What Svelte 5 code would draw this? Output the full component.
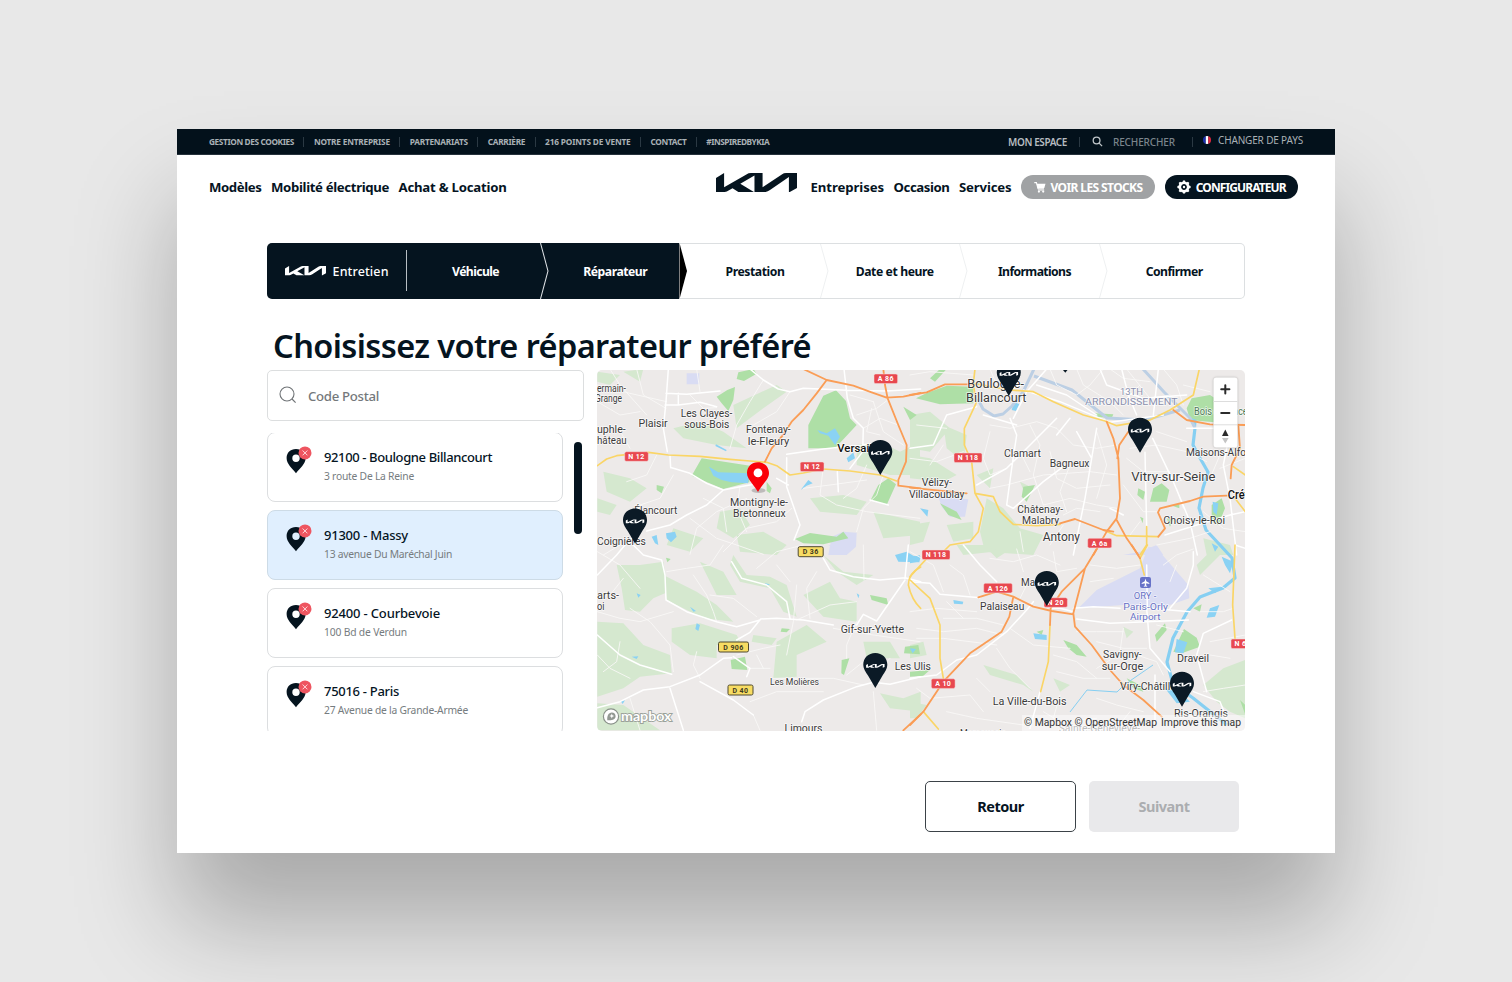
<script>
  // Spreads the letters of a label so that it fills the given width.
  function fit(node, width) {
    node.style.letterSpacing = '0';
    const natural = node.getBoundingClientRect().width;
    node.style.letterSpacing = `${(width - natural) / node.textContent.length}px`;
  }

  const logo = 'M78 173L102 159V199L168 163Q174 159 182 159H216V199L273 163Q279 159 286 159H318V201L294 214V170L238 207Q229 213 220 213H192V166L150 189L191 213H145L127 202L110 211Q105 213 98 213H78Z';

  const topLinks = [
    ['GESTION DES COOKIES', 85],
    ['NOTRE ENTREPRISE', 76],
    ['PARTENARIATS', 58],
    ['CARRIÈRE', 37.5],
    ['216 POINTS DE VENTE', 85.5],
    ['CONTACT', 36],
    ['#INSPIREDBYKIA', 63]
  ];
  const mainLinks = [['Modèles', 52.5], ['Mobilité électrique', 118], ['Achat & Location', 108]];
  const sideLinks = [['Entreprises', 73.5], ['Occasion', 56], ['Services', 52.5]];
  const steps = [
    ['Véhicule', 47, 'done'],
    ['Réparateur', 64, 'current'],
    ['Prestation', 59, ''],
    ['Date et heure', 78, ''],
    ['Informations', 73, ''],
    ['Confirmer', 57, '']
  ];
  const garages = [
    ['92100 - Boulogne Billancourt', 168, '3 route De La Reine', 90],
    ['91300 - Massy', 84, '13 avenue Du Maréchal Juin', 128],
    ['92400 - Courbevoie', 116, '100 Bd de Verdun', 83],
    ['75016 - Paris', 75, '27 Avenue de la Grande-Armée', 144]
  ];

  // Map artwork, in four tiles drawn at three units per pixel.
  const tiles = [
    {
      x: 590, y: 365,
      soft: 'M250 190L330 170L400 200L470 250L380 240L280 220ZM22 20L90 30L60 60L22 50ZM100 20L160 12L150 50ZM430 120L560 60L590 80L520 130L440 190ZM40 320L120 340L170 370L120 410L50 380ZM390 440L450 430L480 480L430 520L380 490ZM800 240L870 230L930 260L990 230L990 330L900 330L800 300ZM660 400L760 390L830 410L800 450L690 440ZM850 440L990 470L990 510L880 520ZM440 510L520 500L590 540L560 570L450 560ZM22 400L80 420L60 450L22 440ZM250 490L340 520L300 560L230 540Z',
      park: 'M655 250L655 180L700 92L738 76L768 108L780 160L800 180L770 212L735 250ZM335 280L480 302L478 352L400 372L305 332ZM445 22L490 12L500 26L462 48L440 42ZM380 95L412 75L435 66L430 105L415 138L395 115ZM895 340L918 358L890 420L842 405L865 360ZM615 522L660 504L740 515L760 500L775 520L700 538L640 535ZM530 350L545 370L540 385L530 378ZM940 125L980 150L960 165ZM200 360L222 365L215 385L200 375Z',
      water: 'M357 305L385 322L478 325L474 355L425 352L395 345L370 332ZM228 505L255 500L260 515L243 532L230 520ZM632 375L655 345L668 355L650 362ZM682 195L710 205L735 190L750 215L735 240L715 212L690 205ZM185 515L200 510L205 540L195 535ZM378 238L410 255L408 259L376 243ZM770 280L790 262L795 280L775 292Z',
      zone: 'M290 25H328V58H290ZM725 515L760 500L800 503L798 545L770 570L715 570Z',
      minor: 'M22 60L120 85L230 110M140 12L160 90L228 130M60 12L90 60L170 150M300 90L340 130L380 128M520 45L480 110L440 180L420 250M22 110L90 150L150 140M320 12L330 80M600 80L560 140L490 180M80 180L120 250M250 330L210 400L150 420M450 365L440 430L470 500M470 400L380 440L320 490L300 568M700 305L690 390L740 420L830 440L990 460M830 300L800 370L760 400M605 430L560 470L470 490L400 560M40 570L90 540L140 510M880 330L860 390L820 430L800 500M900 100L860 130L800 150M820 190L870 160L925 180M850 110L880 200L940 240M780 90L850 110M845 130L830 200L870 210M640 370L720 360L830 345M340 400L400 430L410 500M300 460L380 520L440 540L520 568M200 270L170 330L110 350',
      white: 'M235 12L228 110L220 190L232 260M228 85L290 88L390 78M225 120H265V85M265 120L330 112L380 125M480 12L520 45L565 72L600 80L640 70L770 76L890 78L992 72M762 12L772 100L790 160L820 190L818 260L780 310M245 308L300 325L350 355L400 375L450 365L510 355M400 375L350 420L290 450L240 480L170 498M590 268L700 252L860 235M590 278V365L630 480L612 525M240 272L242 308M742 320L745 380M895 420L840 405M560 340L595 360',
      yellow: 'M22 302L50 282L80 272L175 262L235 270L330 274L420 283L480 288L530 292L560 302L600 330L640 324L700 312L780 318L870 330L920 348',
      orange: 'M640 12L710 45L790 62L845 82L890 98L940 95L992 84M710 45L680 85L640 135L605 170L575 215L545 250L525 290M880 12L885 60L893 100L925 180L950 240L948 290L925 345L925 362L992 370'
    },
    {
      x: 590, y: 545,
      soft: 'M80 60L150 60L220 50L235 140L190 160L150 200L105 195L95 130ZM22 230L100 235L160 300L240 330L245 385L150 395L100 430L22 455ZM245 250L330 235L440 270L450 290L380 300L380 340L300 330L245 290ZM220 90L320 140L380 180L430 230L340 220L230 165ZM430 30L470 90L540 95L590 120L620 215L580 200L540 130L450 110L420 60ZM560 290L650 240L710 290L620 330L620 395L550 400ZM640 150L720 110L750 160L800 170L800 230L700 215ZM22 475L100 480L210 556L22 556ZM330 50L400 80L440 150L380 150ZM700 30L760 80L850 90L800 120L740 80ZM820 290L900 290L930 340L830 340ZM870 445L940 460L992 440L992 500L900 490ZM490 270L560 280L545 300L485 290Z',
      park: 'M422 345L465 335L472 375L425 372ZM840 150L890 160L895 180L845 165ZM945 305L985 300L990 328L942 325ZM755 345L778 340L762 390L754 385ZM575 250L600 252L590 262L572 260ZM228 38L242 42L232 52Z',
      water: 'M915 30L950 20L970 32L992 35L988 52L925 50ZM320 235L330 240L325 258L316 252ZM140 145L152 150L145 158ZM960 310L978 312L968 325ZM800 145L808 150L805 160ZM125 335L145 334L140 342ZM525 115L540 118L530 122ZM300 185L318 198L310 200ZM92 468L105 466L98 477Z',
      zone: 'M715 0L800 0L740 15Z',
      minor: 'M22 20L90 60L150 130M230 80L290 70L360 60L400 0M310 90L350 150L370 200L380 230M360 150L430 160L500 215M22 200L90 220L150 230L250 200M120 190L180 230L240 300L250 380M320 320L310 360L330 400M22 330L60 370L120 400M440 330L520 310L570 300M480 370L540 370M620 120L610 230L590 330M620 225L720 180L800 170M680 80L650 130L660 220M800 230L770 300L770 340M770 390L820 350M550 400L640 400L730 400L820 420M490 510L510 556M120 460L150 556M850 440L860 556M900 340L870 370M500 70L560 20L640 0M560 60L600 110M480 470L560 440L700 440M100 100L60 150L22 160M820 0L822 105M730 250L850 270L990 290M40 380L80 350L90 290M520 370L500 330',
      white: 'M22 488L90 470L160 435L240 425L330 390L400 340L425 338M440 285L480 262L512 222L560 220L640 225L730 240M22 90L80 30L105 0M130 0L160 30L215 45L225 90L228 165L290 200L380 230L440 245L510 225M22 270L90 330L150 360L245 388M425 50L455 100L530 120L590 170L600 220M635 530L645 500L700 465L800 425L850 412L900 418L992 395M860 228L945 105M800 240L820 208L860 228M700 40L720 75L790 95L870 105L945 98L992 110M430 335L480 370L470 395M240 430L280 556M330 410L430 465L490 510M945 100L955 0',
      yellow: 'M992 66Q955 85 955 120Q965 165 992 190',
      orange: 'M940 556L992 508'
    },
    {
      x: 910, y: 365,
      soft: 'M60 140L120 190L60 260L0 250V150ZM0 270L60 280L140 330L100 350L0 340ZM230 400L280 430L330 490L400 510L370 570L225 560L210 500ZM200 330L250 310L240 370ZM100 180L170 210L160 290L110 250ZM0 480L60 470L40 530L0 540ZM880 520L960 540L970 570H890ZM330 350L370 370L350 400ZM110 480L190 470L190 520L130 530Z',
      park: 'M18 100L50 84L110 62L190 65L190 115L90 118ZM845 100L900 90L915 100L912 172L840 165L830 130ZM730 370L755 355L778 375L770 410L720 410ZM90 415L140 440L155 465L115 450ZM905 420L935 400L945 430L925 480L905 470ZM685 370L705 380L700 405L682 390ZM780 420L808 418L808 430ZM60 40L90 12L110 12L75 50ZM340 365L375 360L350 410L335 395ZM555 145L610 148L605 160L560 155ZM770 460L790 465L780 485ZM690 455L700 460L698 475Z',
      water: 'M312 110L328 118L318 138L305 135ZM908 410L925 415L920 450L910 440ZM30 430L55 435L52 455ZM845 160L860 165L858 190ZM905 535L925 545L915 560Z',
      zone: 'M85 395L175 403L165 455L120 455L95 425ZM640 570L690 560L740 540L760 570Z',
      minor: 'M240 12L260 60L300 75M420 12L440 60L500 90L540 60L580 12M500 12L520 60L600 110L640 150M600 12L640 40L720 50M690 60L640 110L560 120M760 12L800 60L820 120M820 60L900 80M240 180L300 190L380 170L440 190M240 200L220 280L240 330L290 310M360 180L390 240L370 330L400 420M440 190L490 240L560 250L620 240M420 260L440 340L500 370L600 360M330 260L360 320M240 370L290 360L400 330L540 320L620 330M400 420L480 400L560 420L620 430M650 280L700 320L780 320M640 360L700 440L740 440M660 250L740 240L830 260L890 290M740 200L830 230M800 350L860 330M690 470L660 510M800 370L820 430M930 270L900 340M930 310L1006 280M880 440L940 490L1006 500M740 540L840 520L900 500M460 480L420 540M570 440L500 430L460 450M330 500L340 560M650 12L720 100L780 90M560 200L590 300L560 400M480 300L450 380L470 440M0 280L80 290L160 260M0 30L60 20L190 30M20 180L110 190M100 240L60 300',
      white: 'M440 160L340 260L290 310L200 360M480 160L440 210M560 190L525 400L490 570M728 220L790 350L840 470L862 570M705 262L710 490M200 125L110 150L70 240L0 250M300 160L320 210L305 310L290 420L310 430L400 350L480 290M340 75L450 110L600 172L760 150M635 12L655 90L680 150M745 12L730 150M765 510L860 480L960 450L1006 440M960 200L940 300L960 400L980 570M570 12L590 60L700 100L830 90M220 150L320 180M380 60L470 90L560 150M600 430L640 450M500 200L545 280L525 400M830 190H930M300 12L330 60L300 75M410 12L350 80L310 160',
      yellow: 'M190 55L300 75L370 80L430 110L520 150L585 168L620 182L720 165L780 135L850 90L868 12M190 55L198 115L163 190L163 240L185 290L195 385L250 395L270 440L310 478L380 482L450 478M195 385L220 430L205 500L180 530L120 540L90 570M580 495L620 512L745 515M710 485V540L690 570M970 305L1006 330M975 400L1006 440M195 12L190 55',
      orange: 'M0 90L50 82L105 58L190 58M590 170L610 220L625 280L630 400L620 460L590 500L550 570M655 200L628 240L622 280M620 465L650 520L685 570M790 135L830 165L900 178L1006 180M985 180L990 250L965 300L962 340M950 392L880 395L840 408L750 430L744 442L765 490L745 515M0 368L170 385M450 475L495 462L580 495L610 500'
    },
    {
      x: 910, y: 545,
      soft: 'M1006 345L940 370L880 420L920 470L960 500L1006 520ZM0 300L40 290L50 330L0 340ZM0 470L50 480L20 520L0 520ZM220 360L320 390L370 440L340 420L240 390ZM230 10L290 20L260 40ZM640 245L670 260L650 280ZM140 0L240 0L250 20L160 30ZM430 400L480 420L450 440ZM860 60L900 20L930 30L870 90Z',
      park: 'M822 252L860 278L870 305L815 325L790 320ZM460 285L500 300L530 335L500 330L475 310ZM650 400L690 420L700 440L670 430ZM735 270L765 235L770 255L740 290ZM990 465L1006 480V510ZM850 190L875 178L870 200ZM380 260L400 255L395 270ZM0 380L60 375L40 392L0 395Z',
      water: 'M370 265L410 270L410 285L375 282ZM800 282L832 292L820 325L795 322ZM900 190L928 180L915 215L890 218ZM765 430L810 440L840 470L800 475ZM895 130L935 125L915 145ZM0 40L30 30L25 50L0 55ZM130 165L160 170L158 178L132 176ZM935 35L970 50L960 85L945 60Z',
      zone: 'M505 190L560 135L690 70L715 5L740 10L775 50L835 120L838 160L780 180L735 190L700 180L640 180Z',
      minor: 'M20 250L100 260L200 250L280 270M20 280L100 280L180 290L260 300M0 200L80 190L200 200M100 220L200 220L280 240M120 60L160 90L180 150M240 40L310 50L380 30L450 60M320 12L340 80M430 20L440 80L500 70M540 60L620 70L690 60M540 110L610 100M300 250L370 300L480 310M260 310L300 370L360 430M430 330L500 350L560 400M440 380L520 400L600 400M560 460L620 480L700 500M500 260L560 260L640 260M640 250L630 320M560 290L640 310L710 310M600 345L560 370M760 60L800 30L850 12M800 60L780 110M740 240L820 260M880 90L960 140M870 200L940 200L970 190M900 290L1006 270M900 330L960 340M20 430L60 460L180 450L220 500M110 500L200 520L340 540M400 500L450 530L560 520M450 450L430 520M200 400L240 440M880 440L940 430L1006 420M680 330L740 350L760 390M110 170L160 220M330 160L350 120L400 90M0 20L70 60L100 140M620 550L660 500M800 500L860 520',
      white: 'M0 110L60 115L90 148L210 158M160 0L210 60L260 110M490 190L550 185L630 190M500 222L600 235L710 230L835 225M710 190L720 310L780 380M850 20L850 60L830 130L780 190M965 225L880 265L860 330L890 440M735 390L735 540M390 440L360 550M0 400L80 390L140 345L200 330L290 260L350 195L370 170M720 190L840 200M425 190L450 190L490 200M710 60L712 190M850 440L930 470L950 520M975 0L1006 10',
      yellow: 'M0 95L60 30M0 105L60 160L90 240L90 340L100 400M420 240L415 350L392 440M690 40L712 0M690 40L703 90M975 0L968 180L975 280M40 500L85 552',
      orange: 'M560 12L525 70L455 140L422 190L420 240M525 70L490 205L495 245L545 300L600 375L640 420L700 465L755 515M310 155L370 185L425 198L490 208M310 155L298 215L275 260L180 325L100 410L40 500L0 540M205 157L260 140L310 155M665 0L690 40'
    }
  ];
  const paints = [
    ['soft', 'fill'], ['zone', 'fill'], ['park', 'fill'], ['water', 'fill'],
    ['minor', 'line'], ['white', 'line'], ['yellow', 'line'], ['orange', 'line']
  ];

  // Text, left, right, baseline, size, style.
  const places = [
    ['ermain-', 597, 626, 391.7], ['Grange', 595, 622, 401.7], ['Plaisir', 638.5, 667.7, 427.3],
    ['Les Clayes-', 680.7, 732.3, 416.7], ['sous-Bois', 684.3, 729.3, 428.3],
    ['Fontenay-', 746, 790.7, 433], ['le-Fleury', 747.7, 789.3, 444.5],
    ['uphle-', 597, 625.7, 432.5], ['hâteau', 597, 626.7, 444], ['Versailles', 837.3, 887, 451.7, 11, 'bold'],
    ['Montigny-le-', 730, 788, 505.7], ['Bretonneux', 733, 785.7, 517.2], ['Élancourt', 634.3, 677.3, 514.3],
    ['Coignières', 597, 645.7, 544.8], ['arts-', 597, 619, 598.8], ['oi', 597, 604.5, 610.3],
    ['Gif-sur-Yvette', 840.7, 904, 632.5], ['Les Ulis', 894.7, 931, 670.3], ['Les Molières', 770, 819, 685.3, 9.5],
    ['Limours', 784.5, 822.5, 732], ['Boulogne-', 967.3, 1024, 388, 12], ['Billancourt', 966, 1026.5, 402, 12],
    ['13TH', 1120, 1143, 394.5, 9.5, 'area'], ['ARRONDISSEMENT', 1085, 1177.5, 405, 9.5, 'area'],
    ['Bois', 1194, 1212, 415.3, 10, 'wood'], ['de Vincennes', 1214, 1266, 415.3, 10, 'wood'],
    ['Clamart', 1004, 1041, 457.3], ['Bagneux', 1049.7, 1089.5, 466.8], ['Vitry-sur-Seine', 1131.3, 1215.5, 480.7, 12],
    ['Maisons-Alfort', 1186, 1253, 456], ['Créteil', 1227.7, 1260, 499, 12, 'bold'],
    ['Vélizy-', 921.7, 952, 486], ['Villacoublay', 909, 964.5, 497.8], ['Châtenay-', 1017.3, 1063, 512.7],
    ['Malabry', 1022, 1059.3, 524], ['Antony', 1042.7, 1080, 541.2, 12], ['Choisy-le-Roi', 1163.3, 1225, 523.7],
    ['Palaiseau', 980, 1024.3, 610], ['Massy', 1021, 1050, 586], ['ORY -', 1133.7, 1156.3, 598.8, 9.5, 'air'],
    ['Paris-Orly', 1123.3, 1168, 609.8, 9.5, 'air'], ['Airport', 1130, 1160.5, 620.3, 9.5, 'air'],
    ['Savigny-', 1103, 1141.7, 658], ['sur-Orge', 1101.7, 1143.3, 669.8], ['Draveil', 1177, 1209, 662.3],
    ['Viry-Châtillon', 1120, 1182, 690], ['La Ville-du-Bois', 992.7, 1066.5, 705], ['Ris-Orangis', 1174, 1228, 717.3],
    ['Marcoussis', 960, 1006, 736.5], ['Sainte-Geneviève-', 1058.7, 1140, 731.7, 10, 'faded']
  ];
  // Text, left, top, width, kind.
  const shields = [
    ['N 12', 624.7, 451.7, 23.6, 'red'], ['N 12', 800.2, 462, 23.8, 'red'], ['A 86', 874, 374, 23.6, 'red'],
    ['N 118', 954, 453, 28, 'red'], ['A 6a', 1087.7, 538.3, 24, 'red'], ['N 118', 922, 550, 28, 'red'],
    ['A 126', 983.7, 583.3, 28.6, 'red'], ['N 20', 1044, 597.7, 23.4, 'red'], ['A 10', 931.3, 678.8, 23.8, 'red'],
    ['N 6', 1231, 639, 19, 'red'], ['D 36', 798.2, 546.7, 25, 'gold'], ['D 906', 718.5, 642, 30, 'gold'],
    ['D 40', 728, 685, 25, 'gold']
  ];
  const pins = [[1008.8, 361], [1140, 417.7], [880.3, 440], [635, 508.5], [1046.8, 571], [875.3, 653], [1182, 671.7]];
</script>

{#snippet kia(cls)}
  <svg class={cls} viewBox="78 159 240 55" preserveAspectRatio="none" fill="currentColor" aria-hidden="true">
    <path d={logo} />
  </svg>
{/snippet}

<div class="stage">
  <div class="window">
    <header class="topbar">
      <div class="toplinks">
        {#each topLinks as [label, w], i}
          {#if i}<i class="sep"></i>{/if}
          <a><span use:fit={w}>{label}</span></a>
        {/each}
      </div>
      <div class="account">
        <b><span use:fit={59}>MON ESPACE</span></b>
        <i class="sep wide"></i>
        <svg class="lens" viewBox="0 0 12 12" fill="none" stroke="currentColor" stroke-width="1.4"><circle cx="5" cy="5" r="3.7" /><path d="M7.8 7.8L11 11" /></svg>
        <span class="query"><span use:fit={62}>RECHERCHER</span></span>
        <i class="sep country"></i>
        <svg class="flag" viewBox="0 0 8 8"><clipPath id="round"><circle cx="4" cy="4" r="4" /></clipPath><g clip-path="url(#round)"><path fill="#1b2fae" d="M0 0h2.8v8H0z" /><path fill="#fff" d="M2.8 0h2.5v8H2.8z" /><path fill="#e3263f" d="M5.3 0H8v8H5.3z" /></g></svg>
        <span class="lang"><span use:fit={85}>CHANGER DE PAYS</span></span>
      </div>
    </header>

    <nav class="mainnav">
      <div class="links">
        {#each mainLinks as [label, w]}<a><span use:fit={w}>{label}</span></a>{/each}
      </div>
      <div class="links right">
        {@render kia('brand')}
        {#each sideLinks as [label, w]}<a><span use:fit={w}>{label}</span></a>{/each}
        <button class="pill gray">
          <svg viewBox="0 0 12 11" width="12" height="11"><path d="M.3.6H2.4L4 6.7H10" fill="none" stroke="#fff" stroke-width="1.1" /><path d="M2.6 1.8H11.5L10.3 6H3.7ZM4 7.6H10.2V8.4H4Z" fill="#fff" /><circle cx="4.9" cy="9.6" r="1.1" fill="#fff" /><circle cx="9.2" cy="9.6" r="1.1" fill="#fff" /></svg>
          <span use:fit={92}>VOIR LES STOCKS</span>
        </button>
        <button class="pill dark">
          <svg viewBox="-7 -7 14 14" width="14" height="14"><circle r="4.2" fill="none" stroke="#fff" stroke-width="2.6" />{#each [0, 45, 90, 135, 180, 225, 270, 315] as a}<path d="M-1.5 -4.6L-1 -6.6H1L1.5 -4.6Z" fill="#fff" transform="rotate({a})" />{/each}<circle r="1.2" fill="#fff" /></svg>
          <span use:fit={90}>CONFIGURATEUR</span>
        </button>
      </div>
    </nav>

    <main>
      <ol class="steps">
        <li class="service">{@render kia('mark')}<span use:fit={56}>Entretien</span></li>
        {#each steps as [label, w, state]}
          <li class={state}>
            <span class="name"><span use:fit={w}>{label}</span></span>
            <svg class="arrow" viewBox="0 0 9 55" preserveAspectRatio="none"><path d="M.5 0L8 27.5L.5 55" /></svg>
          </li>
        {/each}
      </ol>

      <h1><span use:fit={538}>Choisissez votre réparateur préféré</span></h1>

      <div class="finder">
        <section class="side">
          <div class="search">
            <svg viewBox="0 0 18 18" width="18" height="18" fill="none" stroke="#6f7376" stroke-width="1.1"><circle cx="8" cy="8" r="7" /><path d="M13 13L16.6 16.6" /></svg>
            <span use:fit={71}>Code Postal</span>
          </div>
          <div class="results">
            <ul>
              {#each garages as [name, nw, street, sw], i}
                <li class:selected={i === 1}>
                  <svg class="spot" viewBox="0 0 26 28"><path fill="#05141f" fill-rule="evenodd" d="M10 3C4.3 3 .6 6.8.6 12C.6 18 6 22 10 27.2C14 22 19.6 18 19.6 12C19.6 6.8 15.7 3 10 3ZM10 8.5A3.7 3.7 0 1 1 10 15.9A3.7 3.7 0 1 1 10 8.5Z" /><circle cx="19" cy="6.9" r="6.5" fill="#ee5560" /><path d="M16.6 4.5L21.4 9.3M21.4 4.5L16.6 9.3" stroke="#ffd9dc" stroke-width="1" /></svg>
                  <div class="words">
                    <strong><span use:fit={nw}>{name}</span></strong>
                    <small><span use:fit={sw}>{street}</span></small>
                  </div>
                </li>
              {/each}
            </ul>
            <div class="thumb"></div>
          </div>
        </section>

        <svg class="map" viewBox="597 370 648 361" width="648" height="361">
          <rect x="597" y="370" width="648" height="361" fill="#edeae9" />
          {#each paints as [layer, kind]}
            {#each tiles as t}
              <path class="{kind} {layer}" d={t[layer]} transform="translate({t.x} {t.y}) scale(.33333)" />
            {/each}
            {#if layer === 'water'}
              <path class="river pale" d="M1034 369L1023 392L1012 406L1003 414L994 416L983 409L978 399" />
              <path class="river pale" d="M1034 376L1072 390L1107 418L1145 420L1180 410" />
              <path class="river pale" d="M1143 369L1164 392L1190 418L1195 428" />
              <path class="river" d="M1195 428L1193 445L1200 458L1208 472L1203 488L1199 508L1206 530L1220 545L1232 558L1235 578L1223 588L1200 597L1187 612L1173 638L1167 662L1173 684L1193 698L1227 725" />
              <path class="river thin" d="M1070 712L1087 690L1117 692L1124 685M1124 685L1153 665" />
            {/if}
          {/each}

          <g class="place">
            {#each places as [label, x0, x1, y, size = 10.3, tone = '']}
              <text class={tone} x={x0} {y} font-size={size} textLength={x1 - x0} lengthAdjust="spacingAndGlyphs">{label}</text>
            {/each}
          </g>
          {#each shields as [label, x, y, w, kind]}
            <rect class={kind} {x} {y} width={w} height={kind === 'red' ? 9.6 : 10} rx="1.6" />
            <text class="code {kind}" x={x + w / 2} y={y + (kind === 'red' ? 7.3 : 7.5)} text-anchor="middle">{label}</text>
          {/each}
          <g transform="translate(1140 577)"><rect width="11" height="11" rx="2" fill="#6772c8" /><path d="M5.5 1.5L6.3 4.3L9.3 6V7L6.3 6.3L6.1 8.3L7.2 9.3V9.8L5.5 9.4L3.8 9.8V9.3L4.9 8.3L4.7 6.3L1.7 7V6L4.7 4.3Z" fill="#fff" /></g>

          {#each pins as [cx, top]}
            <g transform="translate({cx - 12} {top})">
              <path fill="#0b1a26" d="M12 0C5 0 0 5 0 11.5C0 16 2.5 19 5 23L12 35L19 23C21.5 19 24 16 24 11.5C24 5 19 0 12 0Z" />
              <path fill="#fff" transform="translate(2.8 11) scale(.077 .07) translate(-78 -159)" d={logo} />
            </g>
          {/each}
          <path d="M1063 370H1067.5L1065.3 372.8Z" fill="#0b1a26" />
          <ellipse cx="758.5" cy="490.5" rx="7" ry="2.6" fill="#000" opacity=".2" />
          <path fill="#fa0008" d="M758 462.3C751.5 462.3 747 467 747 473C747 479 752 482 758 492C764 482 769 479 769 473C769 467 764.5 462.3 758 462.3Z" />
          <circle cx="758" cy="472.9" r="4.4" fill="#fff" />

          <g class="controls">
            <rect x="1213.5" y="377.5" width="24" height="70" rx="3" fill="#fff" />
            <path d="M1213.5 401.5H1237.5M1213.5 424.8H1237.5" stroke="#ddd" stroke-width="1" />
            <path d="M1221.2 389.3H1229.4M1225.3 385.2V393.4M1221.2 413H1229.4" stroke="#2b2b2b" stroke-width="2" stroke-linecap="round" />
            <path d="M1222 436L1225.3 429.5L1228.6 436Z" fill="#2b2b2b" />
            <path d="M1222 438L1225.3 443.5L1228.6 438Z" fill="#c4c4c4" />
          </g>

          <rect x="1022" y="715" width="223" height="16" fill="#fff" opacity=".45" />
          <text class="credit" x="1024" y="725.8" textLength="133" lengthAdjust="spacingAndGlyphs">© Mapbox © OpenStreetMap</text>
          <text class="credit" x="1161" y="725.8" textLength="80" lengthAdjust="spacingAndGlyphs">Improve this map</text>
          <g>
            <circle cx="611" cy="716.5" r="7.6" fill="#fff" stroke="#8b928b" stroke-width="1.2" />
            <path d="M607.3 720.2C606.8 716 608.5 712.4 611.8 712.4C614.2 712.4 615.6 714 615.6 716.2C615.6 719.4 611.8 720.8 607.3 720.2Z" fill="#929892" />
            <path d="M611.8 713.6L612.5 715.3L614.2 716L612.5 716.7L611.8 718.4L611.1 716.7L609.4 716L611.1 715.3Z" fill="#fff" />
            <text class="mapbox" x="621" y="720.5" textLength="50.5" lengthAdjust="spacingAndGlyphs">mapbox</text>
          </g>
        </svg>
      </div>

      <footer>
        <button class="back"><span use:fit={46.5}>Retour</span></button>
        <button class="next" disabled><span use:fit={51}>Suivant</span></button>
      </footer>
    </main>
  </div>
</div>

<style>
  :global(body) { background: #e8e8e8; }
  .stage {
    box-sizing: border-box; width: 1512px; height: 982px; padding: 129px 177px; overflow: hidden;
    background: #e8e8e8; font-family: "Noto Sans", "Open Sans", sans-serif; color: #05141f;
  }
  .stage * { box-sizing: border-box; }
  span { white-space: nowrap; }
  button { border: 0; padding: 0; font: inherit; }
  svg { display: block; flex: none; }
  .window { height: 724px; background: #fff; box-shadow: 0 70px 95px rgba(0, 0, 0, .27); }

  .topbar {
    height: 26px; padding: 0 32px; display: flex; justify-content: space-between; align-items: center;
    background: #03111b; color: #a9b0b5; border-bottom: 1px solid #26323c;
  }
  .toplinks, .account { display: flex; align-items: center; }
  .toplinks { font-size: 8.3px; font-weight: 700; }
  .toplinks a { display: flex; }
  .sep { width: 19.9px; height: 10px; background: linear-gradient(#2b3943, #2b3943) center / 1px 100% no-repeat; }
  .account { font-size: 10px; }
  .account b { display: flex; font-weight: 600; color: #b6bcc0; }
  .account .wide { width: 25px; }
  .lens { width: 11px; height: 11px; color: #c1c7ca; margin-right: 10px; }
  .query { display: flex; color: #7b858c; font-weight: 500; }
  .account .country { width: 1px; margin: 0 10px 0 17px; }
  .flag { width: 8px; height: 8px; margin: -3px 7px 0 0; }
  .lang { display: flex; margin-top: -3px; }

  .mainnav { height: 64px; padding: 0 37px 0 32px; display: flex; justify-content: space-between; align-items: center; }
  .links { display: flex; align-items: center; gap: 9.5px; font-size: 13.2px; font-weight: 700; }
  .links a { display: flex; padding-bottom: 1px; }
  .links :global(.brand) { width: 81px; height: 19.5px; margin: -9px 4.5px 0 0; }
  .pill {
    height: 24px; border-radius: 12px; display: flex; align-items: center; justify-content: center;
    color: #fff; font-size: 12px; font-weight: 700;
  }
  .gray { width: 134px; gap: 5px; background: #a0a2a4; }
  .dark { width: 133.5px; gap: 5px; background: #05141f; }

  main { padding: 24px 90px 0; }
  .steps {
    list-style: none; margin: 0; padding: 0; height: 56px; display: grid; grid-template-columns: repeat(7, 1fr);
    border-radius: 5px; overflow: hidden; font-size: 12.2px; font-weight: 700; box-shadow: inset 0 0 0 1px #dcdfe1;
  }
  .steps li { position: relative; display: flex; align-items: center; justify-content: center; }
  .name { display: flex; padding: 1px 2px 0 0; }
  .service, .done, .current { background: #05141f; color: #fff; }
  .steps .current { margin-right: 7px; padding-left: 7px; }
  .steps .service { gap: 6.5px; font-size: 12.5px; font-weight: 500; }
  .steps .service::after { content: ""; position: absolute; right: -.5px; top: 7px; width: 1px; height: 41px; background: #b8bfc4; z-index: 2; }
  .service :global(.mark) { width: 41px; height: 9.5px; }
  .arrow { position: absolute; z-index: 1; left: 100%; top: 1px; width: 9px; height: calc(100% - 2px); margin-left: -6.3px; }
  .arrow path { fill: #fff; stroke: #eef0f1; stroke-width: 1; }
  .done .arrow { top: 0; height: 100%; }
  .done .arrow path { fill: #05141f; stroke: #dfe3e6; }
  .current .arrow { margin-left: -.5px; top: 0; height: 100%; }
  .current .arrow path { fill: #000; stroke: none; }
  .steps li:last-child .arrow { display: none; }

  h1 { margin: 24px 0 0 6px; height: 47px; line-height: 46px; font-size: 32.5px; font-weight: 600; }

  .finder { display: flex; justify-content: space-between; height: 361px; }
  .side { width: 317px; display: flex; flex-direction: column; }
  .search {
    height: 51px; border: 1px solid #dcdedf; border-radius: 5px; padding: 0 11px; display: flex; align-items: center;
    gap: 11px; color: #74787b; font-size: 13.2px; font-weight: 500;
  }
  .search svg { margin-top: -2px; }
  .results { margin-top: 12px; height: 298px; overflow: hidden; display: flex; justify-content: space-between; padding-right: 2px; }
  .results ul { list-style: none; margin: -1px 0 0; padding: 0; width: 296px; display: flex; flex-direction: column; gap: 8px; }
  .results li {
    flex: none; height: 70px; border: 1px solid #dcdee0; border-radius: 8px; padding: 14px 0 0 18px; display: flex; gap: 12.5px;
  }
  .results .selected { background: #e0effe; border-color: #cddbe6; }
  .spot { width: 26px; height: 28px; margin: -1px 0 0 -.5px; }
  .words { display: flex; flex-direction: column; }
  strong { display: flex; height: 20px; line-height: 20px; font-size: 13px; font-weight: 500; }
  small { display: flex; height: 18px; line-height: 18px; font-size: 10.3px; color: #767c80; }
  .thumb { width: 8px; height: 92px; margin-top: 9px; border-radius: 4px; background: #05141f; }

  .map { border-radius: 5px; overflow: hidden; }
  .fill { stroke: none; }
  .line { fill: none; stroke-linejoin: round; stroke-linecap: round; }
  .soft { fill: #d5e8cf; }
  .park { fill: #aedfa6; }
  .water { fill: #8ad2f4; }
  .zone { fill: #d9dcf3; }
  .minor { stroke: #f9f8f7; stroke-width: 2.6; }
  .white { stroke: #fff; stroke-width: 4.5; }
  .yellow { stroke: #fad566; stroke-width: 5; }
  .orange { stroke: #fa9d56; stroke-width: 5.5; }
  .river { fill: none; stroke: #86cff2; stroke-width: 3.2; stroke-linejoin: round; }
  .pale { stroke: #bccfe4; stroke-width: 3; }
  .thin { stroke-width: 1; }
  .map text { font-family: Roboto, "Open Sans", sans-serif; }
  .place text { fill: #3a3a3a; paint-order: stroke; stroke: rgba(255, 255, 255, .75); stroke-width: 1.5px; stroke-linejoin: round; }
  .place .bold { font-weight: 500; fill: #111; }
  .place .area { fill: #8b90ae; }
  .place .wood { fill: #4f7a58; }
  .place .air { fill: #6670c5; }
  .place .faded { fill: #8a8a8a; }
  rect.red { fill: #e8484f; stroke: #f6dcdc; stroke-width: .5; }
  rect.gold { fill: #f7dc63; stroke: #4e4930; stroke-width: 1; }
  .code { font-size: 7px; font-weight: 700; letter-spacing: .4px; fill: #fff; }
  .code.gold { fill: #403a20; }
  .controls { filter: drop-shadow(0 0 1px rgba(0, 0, 0, .25)); }
  .credit { font-size: 10.5px; fill: #333; }
  .map .mapbox { font-family: Lato, sans-serif; font-size: 13.5px; font-weight: 700; fill: #fff; stroke: #9ba29a; stroke-width: 1.8px; paint-order: stroke; }

  footer { display: flex; justify-content: flex-end; gap: 13px; padding: 49.5px 6px 0 0; }
  footer button { height: 51.5px; border-radius: 5px; font-size: 14.5px; font-weight: 700; padding-bottom: 1px; }
  .back { width: 151px; background: #fff; color: #05141f; border: 1px solid #3b4248; }
  .next { width: 150px; background: #e9e9eb; color: #abadb0; }
</style>
